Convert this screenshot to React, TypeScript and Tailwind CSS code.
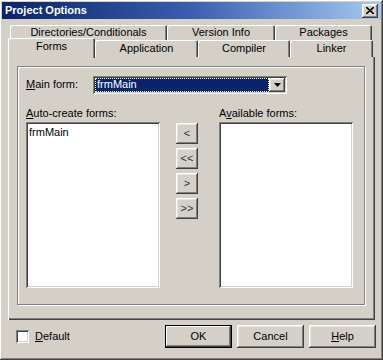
import React from "react";

const raised =
  "shadow-[inset_-1px_-1px_#404040,inset_1px_1px_#ffffff,inset_-2px_-2px_#808080,inset_2px_2px_#e8e6e2]";
const sunken =
  "shadow-[inset_1px_1px_#808080,inset_-1px_-1px_#ffffff,inset_2px_2px_#404040,inset_-2px_-2px_#d4d0c8]";
const tabEdge =
  "shadow-[inset_1px_1px_#ffffff,inset_-1px_0_#404040,inset_-2px_0_#808080]";

function Tab({ label, w, active }: { label: string; w: string; active?: boolean }) {
  return (
    <div
      className={`${w} ${tabEdge} flex items-center justify-center rounded-t-[2px] bg-[#d4d0c8] ${
        active ? "relative z-10 -mt-[2px] h-[20px] -mb-px pb-[3px]" : "h-full"
      }`}
    >
      <span>{label}</span>
    </div>
  );
}

function ArrowBtn({ label }: { label: string }) {
  return (
    <div
      className={`w-[22px] h-[21px] ${raised} flex items-center justify-center text-[11px] leading-none text-[#333]`}
    >
      {label}
    </div>
  );
}

function Btn({ label, def, u }: { label: string; def?: boolean; u?: number }) {
  const chars = label.split("");
  return (
    <div
      className={`w-[67px] h-[23px] flex items-center justify-center ${
        def
          ? "border border-black shadow-[inset_-1px_-1px_#404040,inset_1px_1px_#ffffff,inset_-2px_-2px_#808080]"
          : raised
      }`}
    >
      <span>
        {chars.map((c, i) => (
          <span key={i} className={i === u ? "underline" : ""}>
            {c}
          </span>
        ))}
      </span>
    </div>
  );
}

export default function App() {
  return (
    <div
      className="w-[383px] h-[360px] bg-[#d4d0c8] text-[11px] text-black flex flex-col shadow-[inset_-1px_-1px_#404040,inset_1px_1px_#ffffff,inset_-2px_-2px_#808080]"
      style={{ fontFamily: '"Liberation Sans", Arial, sans-serif' }}
    >
      {/* title bar */}
      <div className="mx-[2px] mt-[2px] h-[17px] bg-gradient-to-r from-[#0a246a] via-[#3a5fb0] to-[#a6caf0] flex items-center pl-[3px] pr-[3px]">
        <span className="text-white font-bold text-[11px] flex-1">Project Options</span>
        <div
          className={`w-[16px] h-[14px] ${raised} bg-[#d4d0c8] flex items-center justify-center`}
        >
          <svg width="8" height="7" viewBox="0 0 8 7">
            <path d="M0 0L8 7M8 0L0 7" stroke="#000" strokeWidth="1.6" />
          </svg>
        </div>
      </div>

      {/* tab rows */}
      <div className="mt-[6px] ml-[10px] h-[15px] flex">
        <Tab label="Directories/Conditionals" w="w-[157px]" />
        <Tab label="Version Info" w="w-[108px]" />
        <Tab label="Packages" w="w-[97px]" />
      </div>
      <div className="ml-[8px] h-[17px] flex items-end">
        <Tab label="Forms" w="w-[87px]" active />
        <Tab label="Application" w="w-[103px]" />
        <Tab label="Compiler" w="w-[92px]" />
        <Tab label="Linker" w="w-[83px]" />
      </div>

      {/* page */}
      <div className="ml-[8px] w-[367px] h-[263px] pt-[9px] pl-[9px] shadow-[inset_1px_0_#ffffff,inset_-1px_-1px_#404040,inset_-2px_-2px_#808080]">
        <div className="w-[348px] h-[239px] border border-[#808080] shadow-[1px_1px_#ffffff,inset_1px_1px_#ffffff] pt-[9px] pl-[8px] flex flex-col">
          <div className="flex items-center h-[17px]">
            <span className="w-[67px]">
              <span className="underline">M</span>ain form:
            </span>
            <div className={`w-[194px] h-[18px] ${sunken} bg-white flex p-[2px]`}>
              <div className="flex-1 bg-[#0a246a] text-white pl-[2px] flex items-center outline-1 outline-dotted outline-[#ffff99] -outline-offset-1">
                frmMain
              </div>
              <div className={`w-[16px] ${raised} bg-[#d4d0c8] flex items-center justify-center`}>
                <svg width="7" height="4" viewBox="0 0 7 4">
                  <path d="M0 0H7L3.5 4Z" fill="#000" />
                </svg>
              </div>
            </div>
          </div>

          <div className="flex mt-[14px]">
            <div className="flex flex-col w-[134px]">
              <span className="h-[13px] leading-[13px]">
                <span className="underline">A</span>uto-create forms:
              </span>
              <div className={`mt-[2px] h-[166px] bg-white ${sunken} px-[3px] py-[2px]`}>
                frmMain
              </div>
            </div>
            <div className="ml-[16px] mt-[16px] flex flex-col gap-[4px]">
              <ArrowBtn label="<" />
              <ArrowBtn label="<<" />
              <ArrowBtn label=">" />
              <ArrowBtn label=">>" />
            </div>
            <div className="ml-[21px] flex flex-col w-[134px]">
              <span className="h-[13px] leading-[13px]">
                A<span className="underline">v</span>ailable forms:
              </span>
              <div className={`mt-[2px] h-[166px] bg-white ${sunken}`} />
            </div>
          </div>
        </div>
      </div>

      {/* bottom */}
      <div className="flex items-center mt-[5px] h-[23px]">
        <div className={`ml-[16px] w-[13px] h-[13px] bg-white ${sunken}`} />
        <span className="ml-[6px] flex-1">
          <span className="underline">D</span>efault
        </span>
        <div className="flex gap-[5px] mr-[7px]">
          <Btn label="OK" def />
          <Btn label="Cancel" />
          <Btn label="Help" u={0} />
        </div>
      </div>
    </div>
  );
}
